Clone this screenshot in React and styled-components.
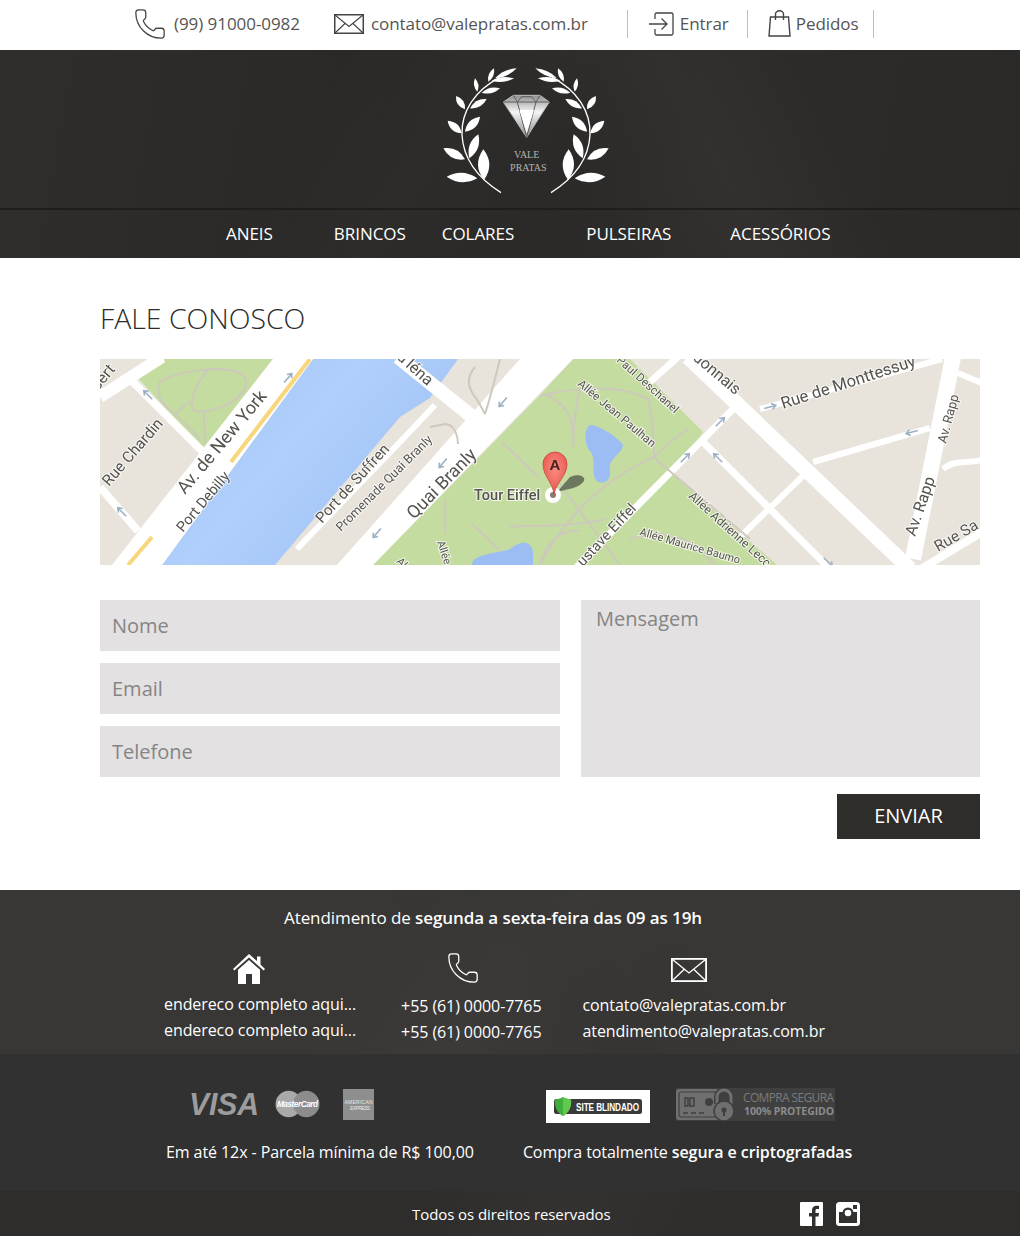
import React from 'react';
import styled, { createGlobalStyle } from 'styled-components';
import { Phone } from 'lucide-react';

const GlobalStyle = createGlobalStyle`
  html, body {
    margin: 0;
    padding: 0;
    background: #fff;
  }
  body {
    font-family: "Open Sans", "Liberation Sans", sans-serif;
  }
  * {
    box-sizing: border-box;
  }
`;

const Page = styled.div`
  width: 1020px;
  height: 1236px;
  overflow: hidden;
`;

/* top contact bar */
const TopBar = styled.div`
  height: 50px;
  display: flex;
  align-items: center;
  padding: 0 0 3px 136px;
  background: #fff;
  color: #555;
  font-size: 17px;
  letter-spacing: -0.06px;
`;

const TopItem = styled.div`
  display: flex;
  align-items: center;
  gap: ${({ $gap }) => $gap || 8}px;
  margin-left: ${({ $left }) => $left || 0}px;
`;

const TopDivider = styled.span`
  width: 1px;
  height: 28px;
  background: #bdbdbd;
  margin-left: ${({ $left }) => $left}px;
`;

const IconSvg = styled.svg`
  display: block;
  flex-shrink: 0;
`;

/* dark header */
const Header = styled.header`
  height: 208px;
  color: #fff;
  background:
    linear-gradient(118deg, transparent 30%, rgba(255, 255, 255, 0.02) 42%, transparent 55%),
    linear-gradient(62deg, transparent 55%, rgba(255, 255, 255, 0.025) 68%, transparent 80%),
    linear-gradient(100deg, #2f2e2c 0%, #292826 40%, #2d2c2a 70%, #2a2927 100%);
`;

const LogoArea = styled.div`
  height: 160px;
  display: flex;
  justify-content: center;
  padding-left: 30px;
  border-bottom: 2px solid #1f1e1d;
`;

const Nav = styled.nav`
  height: 48px;
  display: flex;
  align-items: center;
  padding: 0 0 2px 226px;
  font-size: 17px;
  letter-spacing: -0.05px;
`;

const NavLink = styled.a`
  color: #fff;
  margin-left: ${({ $left }) => $left || 0}px;
`;

/* page content */
const Main = styled.main`
  height: 632px;
  padding: 40px 40px 0 100px;
  background: #fff;
`;

const Title = styled.h1`
  margin: 0 0 20px;
  height: 41px;
  font-size: 28.4px;
  line-height: 41px;
  font-weight: 300;
  color: #2d2c2a;
`;

const MapBox = styled.div`
  width: 880px;
  height: 206px;
  overflow: hidden;
  svg {
    display: block;
    filter: blur(0.35px);
  }
`;

const MapLabel = styled.text`
  font-family: Roboto, "Liberation Sans", sans-serif;
  font-size: ${({ $size }) => $size}px;
  font-weight: ${({ $bold }) => ($bold ? 500 : 400)};
  fill: #55534e;
  stroke: #fff;
  stroke-opacity: 0.75;
  stroke-width: 2px;
  paint-order: stroke;
`;

const ContactForm = styled.form`
  margin-top: 35px;
  display: grid;
  grid-template-columns: 460px 399px;
  column-gap: 21px;
`;

const FieldColumn = styled.div`
  display: flex;
  flex-direction: column;
  gap: 12px;
`;

const Field = styled.input`
  height: 51px;
  border: none;
  outline: none;
  padding: 0 12px 1px;
  background: #e3e1e2;
  font-family: inherit;
  font-size: 20px;
  &::placeholder {
    color: #858585;
    opacity: 1;
  }
`;

const MessageField = styled.textarea`
  height: 177px;
  border: none;
  outline: none;
  resize: none;
  padding: 4px 15px;
  background: #e3e1e2;
  font-family: inherit;
  font-size: 20px;
  line-height: 30px;
  &::placeholder {
    color: #858585;
    opacity: 1;
  }
`;

const SendRow = styled.div`
  grid-column: 1 / 3;
  display: flex;
  justify-content: flex-end;
  margin-top: 17px;
`;

const SendButton = styled.button`
  width: 143px;
  height: 45px;
  border: none;
  padding: 0 0 2px;
  background: #2e2d29;
  color: #fff;
  font-family: inherit;
  font-size: 20px;
`;

/* footer */
const Footer = styled.footer`
  color: #fff;
  font-size: 16px;
  letter-spacing: -0.08px;
`;

const FooterTop = styled.section`
  height: 164px;
  padding-top: 16px;
  overflow: hidden;
  background:
    linear-gradient(125deg, transparent 35%, rgba(255, 255, 255, 0.015) 50%, transparent 65%),
    linear-gradient(60deg, transparent 40%, rgba(0, 0, 0, 0.04) 55%, transparent 70%),
    #383735;
`;

const Hours = styled.div`
  height: 24px;
  line-height: 24px;
  padding-left: 284px;
  font-size: 17px;
  b {
    font-weight: 600;
  }
`;

const ContactColumns = styled.div`
  display: flex;
  padding: 0 0 0 164px;
  margin-top: 24px;
`;

const ContactColumn = styled.div`
  margin-left: ${({ $left }) => $left || 0}px;
  padding-top: ${({ $top }) => $top || 0}px;
`;

const ContactIcon = styled.div`
  height: 32px;
  margin-top: ${({ $raise }) => $raise || 0}px;
  margin-left: ${({ $indent }) => $indent}px;
  margin-bottom: ${({ $after }) => $after}px;
`;

const ContactLine = styled.div`
  height: 26px;
  line-height: 26px;
  white-space: nowrap;
`;

const FooterMiddle = styled.section`
  height: 137px;
  background: #313131;
  display: flex;
  padding: 32px 0 0 166px;
`;

const PayColumn = styled.div`
  margin-left: ${({ $left }) => $left || 0}px;
`;

const LogoRow = styled.div`
  height: 36px;
  display: flex;
  align-items: center;
  gap: ${({ $gap }) => $gap}px;
  padding-left: ${({ $indent }) => $indent}px;
`;

const PayText = styled.p`
  margin: 18px 0 0;
  height: 24px;
  line-height: 24px;
  white-space: nowrap;
  b {
    font-weight: 600;
  }
`;

const FooterBottom = styled.section`
  height: 45px;
  display: flex;
  align-items: center;
  padding: 0 0 0 412px;
  font-size: 15px;
  background:
    linear-gradient(115deg, transparent 40%, rgba(255, 255, 255, 0.025) 55%, transparent 70%),
    #2f2d2b;
`;

const Social = styled.div`
  display: flex;
  gap: 13px;
  margin-left: 189px;
`;

const WhiteBadge = styled.div`
  width: 104px;
  height: 33px;
  background: #fff;
  display: flex;
  align-items: center;
  justify-content: center;
  margin-top: 5px;
`;

const AmexMark = styled.div`
  margin-left: 7px;
`;

const PhoneIcon = styled(Phone)`
  display: block;
  flex-shrink: 0;
  margin-left: ${({ $left }) => $left || 0}px;
`;

/* icons */
const MailIcon = ({ color = '#444', width = 30, height = 20 }) => (
  <IconSvg width={width} height={height} viewBox="0 0 30 20" fill="none" stroke={color}>
    <rect x="0.75" y="0.75" width="28.5" height="18.5" strokeWidth="1.5" />
    <path d="M1 1l14 11.5L29 1M1 19l10.5-10M29 19L18.5 9" strokeWidth="1.1" />
  </IconSvg>
);

const EnterIcon = () => (
  <IconSvg width="25" height="24" viewBox="0 0 25 24" fill="none" stroke="#444" strokeWidth="1.3">
    <path d="M6 7V2.500a1.500 1.500 0 0 1 1.500-1.500h15A1.500 1.500 0 0 1 24 2.500v19a1.500 1.500 0 0 1-1.500 1.500h-15A1.500 1.500 0 0 1 6 21.500V17" />
    <path d="M0 12h18M12.500 6.500L18 12l-5.500 5.500" />
  </IconSvg>
);

const BagIcon = () => (
  <IconSvg width="23" height="27" viewBox="0 0 23 27" fill="none" stroke="#444" strokeWidth="1.4">
    <path d="M2.500 7h18L22 26H1z" />
    <path d="M7.500 10V4a4 3.300 0 0 1 8 0v6" />
  </IconSvg>
);

const HouseIcon = () => (
  <IconSvg width="32" height="30" viewBox="0 0 32 30" fill="#fff">
    <path d="M16 0l8 7V2.500h3.500v8L32 15l-1.300 1.500L16 3.500 1.300 16.500 0 15z" />
    <path d="M16 6l11 9.800V30h-8v-10h-6v10H5V15.800z" />
  </IconSvg>
);

const FacebookIcon = () => (
  <IconSvg width="23" height="24" viewBox="0 0 23 24">
    <rect width="23" height="24" rx="1" fill="#fff" />
    <path d="M15.500 24v-9.500h3l.5-3.500h-3.500V8.800c0-1.100.4-1.700 1.800-1.700H19V4c-.5-.1-1.400-.2-2.500-.2-2.700 0-4.500 1.600-4.500 4.500V11H9v3.500h3V24z" fill="#33312f" />
  </IconSvg>
);

const InstagramIcon = () => (
  <IconSvg width="24" height="24" viewBox="0 0 24 24">
    <rect width="24" height="24" rx="3.500" fill="#fff" />
    <rect x="3" y="10" width="18" height="11" fill="#33312f" />
    <path d="M3 10h4a6 6 0 0 0 10 0h4V4.500H3z" fill="#fff" />
    <circle cx="12" cy="11" r="5.500" fill="#33312f" />
    <circle cx="12" cy="11" r="3.300" fill="#fff" />
    <rect x="17" y="3" width="4" height="4" fill="#33312f" />
  </IconSvg>
);

/* logo wreath, coordinates are in a 630x480 box */
const leafPath = ([x1, y1, x2, y2, w]) => {
  const dx = x2 - x1;
  const dy = y2 - y1;
  const len = Math.hypot(dx, dy);
  const nx = (-dy / len) * w;
  const ny = (dx / len) * w;
  const mx = x1 + dx * 0.5;
  const my = y1 + dy * 0.5;
  return `M${x1} ${y1}Q${mx + nx} ${my + ny} ${x2} ${y2}Q${mx - nx} ${my - ny} ${x1} ${y1}Z`;
};

const leaves = [
  [172, 385, 80, 380, 28],
  [192, 390, 190, 298, 34],
  [135, 328, 70, 295, 26],
  [148, 325, 175, 253, 26],
  [125, 250, 83, 212, 22],
  [135, 245, 180, 200, 24],
  [135, 178, 108, 138, 19],
  [150, 175, 200, 147, 19],
  [172, 125, 165, 85, 13],
  [185, 128, 240, 115, 16],
  [205, 95, 222, 55, 14],
  [215, 92, 282, 85, 14],
  [225, 85, 290, 55, 14],
];

const WreathSide = () => (
  <g fill="#fff">
    <path d="M243 428C175 385 130 330 126 255C123 185 165 120 240 82" fill="none" stroke="#fff" strokeWidth="4" />
    {leaves.map((l) => (
      <path key={l.join('-')} d={leafPath(l)} />
    ))}
  </g>
);

const Logo = () => (
  <IconSvg width="210" height="158" viewBox="0 0 630 474">
    <defs>
      <linearGradient id="gem" x1="0" y1="0" x2="0" y2="1">
        <stop offset="0" stopColor="#8f8f8f" />
        <stop offset="0.4" stopColor="#f5f5f5" />
        <stop offset="1" stopColor="#8a8a8a" />
      </linearGradient>
    </defs>
    <WreathSide />
    <g transform="translate(636 0) scale(-1 1)">
      <WreathSide />
    </g>
    <path d="M250 156L280 136H360L388 156L320 262Z" fill="url(#gem)" stroke="#bcbcbc" strokeWidth="3" />
    <path d="M250 156H388M280 136L292 156L320 262L348 156L360 136M292 156L305 140H335L348 156" fill="none" stroke="#5d5d5d" strokeWidth="3" />
    <path d="M298 180H342L320 250Z" fill="#fff" />
    <text x="320" y="323" textAnchor="middle" fontFamily="Liberation Serif, serif" fontSize="30" fill="#b4b4b4">VALE</text>
    <text x="325" y="364" textAnchor="middle" fontFamily="Liberation Serif, serif" fontSize="30" fill="#b4b4b4">PRATAS</text>
  </IconSvg>
);

/* map data */
const roads = [
  ['M0 38L62 -2', 12],
  ['M30 20L105 95', 8],
  ['M0 128L38 172', 8],
  ['M298 -2L385 68', 14],
  ['M197 190L300 83L335 46', 6],
  ['M550 23L578 -2', 7],
  ['M637 46L540 144L475 210', 7],
  ['M588 -2L810 210', 15],
  ['M603 83L730 210', 7],
  ['M830 69L713 103', 6],
  ['M707 113L640 178', 6],
  ['M660 50L842 0', 6],
  ['M853 -2L813 200', 16],
  ['M821 210L882 173', 8],
  ['M843 110C855 100 868 105 882 101', 6],
  ['M858 14L882 24', 6],
];

const parkPaths = [
  'M440 37C475 28 520 25 548 40C555 70 552 85 555 97C520 115 480 135 440 205',
  'M480 28C475 50 473 70 473 88',
  'M445 35C465 45 475 55 473 88',
  'M555 97L569 84L588 70',
  'M553 98L650 180',
  'M456 120L520 206',
  'M410 168C425 165 465 170 505 160',
  'M440 206C445 185 460 170 480 172',
  'M530 180C560 170 590 175 615 206',
  'M372 165L415 206',
  'M345 140L345 175M402 83L440 120',
  'M60 22C55 50 65 40 100 80M60 22C90 8 140 5 146 20C148 40 115 55 95 52C85 45 100 20 110 8M75 55L90 42M103 52C105 65 105 75 105 85',
  'M375 8C365 20 368 30 378 42L385 55M400 0C395 20 390 40 385 55M330 68L345 65C355 65 358 78 358 85',
];

const labels = [
  { text: 'sert', x: -2, y: 32, angle: -50, size: 16 },
  { text: 'Rue Chardin', x: 9, y: 128, angle: -49, size: 15.5 },
  { text: 'Av. de New York', x: 85, y: 136, angle: -50, size: 18 },
  { text: 'Port Debilly', x: 83, y: 174, angle: -50, size: 14.500 },
  { text: 'Port de Suffren', x: 222, y: 165, angle: -47.500, size: 15 },
  { text: 'Promenade Quai Branly', x: 241, y: 173, angle: -45, size: 12.500 },
  { text: 'Quai Branly', x: 314, y: 161, angle: -45.500, size: 18 },
  { text: "d'Iéna", x: 296, y: -1, angle: 42, size: 16 },
  { text: 'Allée', x: 337, y: 183, angle: 72, size: 11 },
  { text: 'Al', x: 296, y: 203, angle: 45, size: 11 },
  { text: 'Tour Eiffel', x: 374, y: 141, angle: 0, size: 14.500, bold: true },
  { text: 'Allée Jean Paulhan', x: 477, y: 26, angle: 40, size: 11.500 },
  { text: 'Paul Deschanel', x: 516, y: 2, angle: 42, size: 11.500 },
  { text: 'donnais', x: 592, y: 0, angle: 40, size: 16 },
  { text: 'Rue de Monttessuy', x: 683, y: 50, angle: -18, size: 16.500 },
  { text: 'Av. Rapp', x: 846, y: 85, angle: -75, size: 13 },
  { text: 'Av. Rapp', x: 815, y: 178, angle: -71, size: 16 },
  { text: 'Rue Sa', x: 838, y: 193, angle: -30, size: 15.500 },
  { text: 'ustave Eiffel', x: 483, y: 208, angle: -47, size: 14.500 },
  { text: 'Allée Maurice Baumo', x: 539, y: 176, angle: 16, size: 11 },
  { text: 'Allée Adrienne Lecc', x: 588, y: 138, angle: 42, size: 12 },
];

const arrows = [
  [188, 19, -50], [48, 36, 225], [22, 153, 225], [403, 43, 130], [343, 104, 130], [277, 174, 130],
  [670, 48, -15], [620, 63, -45], [585, 99, -45], [618, 99, 225], [812, 73, 165], [728, 203, 45],
];

const MapDrawing = () => (
  <svg width="880" height="206" viewBox="0 0 880 206">
    <defs>
      <linearGradient id="river" x1="0" y1="0" x2="1" y2="0.6">
        <stop offset="0" stopColor="#9fc1f4" />
        <stop offset="0.5" stopColor="#b0cffb" />
        <stop offset="1" stopColor="#9fc1f4" />
      </linearGradient>
      <radialGradient id="pinHead" cx="0.5" cy="0.4" r="0.6">
        <stop offset="0" stopColor="#f98d83" />
        <stop offset="1" stopColor="#e8564b" />
      </radialGradient>
    </defs>
    <rect width="880" height="206" fill="#e8e4dc" />
    <path d="M38 19L65 0H173L103 90Z" fill="#c4dc9f" />
    <path d="M440 36L473 0H530L603 73L573 116L677 206H273Z" fill="#c4dc9f" />
    <path d="M213 0H358L330 39L300 58L175 206H62Z" fill="url(#river)" />
    <path d="M173 0H213L62 206H12Z" fill="#fff" />
    <path d="M420 0H473L273 206H237Z" fill="#fff" />
    <path d="M210 0L131 103M52 178L28 206" stroke="#f8d67c" strokeWidth="4" fill="none" />
    {roads.map(([d, w]) => (
      <path key={d} d={d} stroke="#fff" strokeWidth={w} fill="none" />
    ))}
    {parkPaths.map((d) => (
      <path key={d} d={d} stroke="#cdc9bc" strokeWidth="2" fill="none" />
    ))}
    <path d="M490 66C500 66 520 80 523 86C522 95 508 100 510 110C512 125 500 125 497 122C490 115 497 100 490 92C484 85 484 70 490 66Z" fill="#9bbdf3" />
    <path d="M372 206C372 195 395 195 410 190C425 178 433 185 433 195L433 206Z" fill="#9bbdf3" />
    {arrows.map(([x, y, a]) => (
      <path key={`${x}-${y}`} d="M-6 0H5M2 -3L6 0L2 3" transform={`translate(${x} ${y}) rotate(${a})`} stroke="#9db0c4" strokeWidth="1.600" fill="none" />
    ))}
    {labels.map((l) => (
      <MapLabel key={l.text + l.x} $size={l.size} $bold={l.bold} transform={`translate(${l.x} ${l.y}) rotate(${l.angle})`}>
        {l.text}
      </MapLabel>
    ))}
    <path d="M457 133L470 118C478 114 486 117 484 122C478 130 466 130 457 133Z" fill="#5d6651" opacity="0.85" />
    <circle cx="453" cy="136" r="8" fill="#fff" />
    <circle cx="453" cy="136" r="3" fill="#8a7a70" />
    <path d="M454 135C452 122 443 117 443 105A12 12 0 0 1 467 105C467 117 457 122 454 135Z" fill="url(#pinHead)" stroke="#c8453c" strokeWidth="0.800" />
    <text x="455" y="111" textAnchor="middle" fontFamily="Liberation Sans, sans-serif" fontSize="15" fontWeight="700" fill="#4a2320">A</text>
  </svg>
);

/* payment and trust logos */
const CardLogos = () => (
  <>
    <IconSvg width="70" height="30" viewBox="0 0 70 30">
      <text x="0" y="26" fontFamily="Liberation Sans, sans-serif" fontSize="32" fontWeight="700" fontStyle="italic" fill="#9c9c9c" textLength="70" lengthAdjust="spacingAndGlyphs">VISA</text>
    </IconSvg>
    <IconSvg width="45" height="28" viewBox="0 0 46 28">
      <circle cx="14" cy="14" r="13.500" fill="#a9a9a9" />
      <circle cx="32" cy="14" r="13.500" fill="#8c8c8c" />
      <text x="23" y="17" textAnchor="middle" fontFamily="Liberation Sans, sans-serif" fontSize="8.500" fontWeight="700" fontStyle="italic" fill="#fff" textLength="42">MasterCard</text>
    </IconSvg>
    <AmexMark>
      <IconSvg width="31" height="31" viewBox="0 0 31 31">
        <rect width="31" height="31" fill="#8e8e8e" />
        <text x="15.500" y="15" textAnchor="middle" fontFamily="Liberation Sans, sans-serif" fontSize="5" fill="#e8e8e8" textLength="28">AMERICAN</text>
        <text x="17" y="21" textAnchor="middle" fontFamily="Liberation Sans, sans-serif" fontSize="5" fill="#e8e8e8" textLength="20">EXPRESS</text>
      </IconSvg>
    </AmexMark>
  </>
);

const SiteBlindado = () => (
  <IconSvg width="88" height="19" viewBox="0 0 88 19">
    <rect x="0" y="2" width="88" height="15" rx="2.500" fill="#3a3a3a" />
    <path d="M9 0C12 2 15 2 17 2.500C18 9 15 16 9 19C3 16 0 9 1 2.500C3 2 6 2 9 0Z" fill="#3fae3a" />
    <path d="M9 0C12 2 15 2 17 2.500C18 9 15 16 9 19Z" fill="#63c94e" />
    <text x="22" y="13.500" fontFamily="Liberation Sans, sans-serif" fontSize="10.500" fontWeight="700" fill="#fff" textLength="63" lengthAdjust="spacingAndGlyphs">SITE BLINDADO</text>
  </IconSvg>
);

const CompraSegura = () => (
  <IconSvg width="159" height="33" viewBox="0 0 159 33">
    <rect width="159" height="33" fill="#3f3f3f" />
    <rect y="1" width="44" height="31" rx="3" fill="#6f6f6f" />
    <rect x="3" y="4" width="38" height="25" rx="2" fill="none" stroke="#3f3f3f" strokeWidth="1.200" />
    <path d="M9 10h3v8H9zM14 10h4v8h-4zM7 25h5M15 25h5M23 25h5" stroke="#3f3f3f" strokeWidth="1.500" fill="none" />
    <circle cx="33" cy="14" r="4" fill="#3f3f3f" />
    <path d="M41 16v-7a7 7 0 0 1 14 0v7" stroke="#3f3f3f" strokeWidth="6" fill="none" />
    <path d="M41 16v-7a7 7 0 0 1 14 0v7" stroke="#6f6f6f" strokeWidth="3" fill="none" />
    <circle cx="48" cy="23" r="10" fill="#6f6f6f" stroke="#3f3f3f" strokeWidth="1.500" />
    <circle cx="48" cy="22" r="2.500" fill="#3f3f3f" />
    <rect x="47" y="22" width="2" height="6" fill="#3f3f3f" />
    <text x="67" y="14" fontFamily="Open Sans, sans-serif" fontSize="12" fill="#7b7b7b" textLength="91">COMPRA SEGURA</text>
    <text x="68" y="27" fontFamily="Open Sans, sans-serif" fontSize="10.500" fontWeight="700" fill="#8b8b8b" textLength="90">100% PROTEGIDO</text>
  </IconSvg>
);

export default function App() {
  return (
    <Page>
      <GlobalStyle />
      <TopBar>
        <TopItem $gap={7}>
          <PhoneIcon $left={-3} size={34} strokeWidth={0.9} color="#444" />
          (99) 91000-0982
        </TopItem>
        <TopItem $left={34} $gap={7}>
          <MailIcon />
          contato@valepratas.com.br
        </TopItem>
        <TopDivider $left={39} />
        <TopItem $left={21} $gap={6}>
          <EnterIcon />
          Entrar
        </TopItem>
        <TopDivider $left={18} />
        <TopItem $left={20} $gap={5}>
          <BagIcon />
          Pedidos
        </TopItem>
        <TopDivider $left={14} />
      </TopBar>

      <Header>
        <LogoArea>
          <Logo />
        </LogoArea>
        <Nav>
          <NavLink>ANEIS</NavLink>
          <NavLink $left={61}>BRINCOS</NavLink>
          <NavLink $left={36}>COLARES</NavLink>
          <NavLink $left={72}>PULSEIRAS</NavLink>
          <NavLink $left={59}>ACESSÓRIOS</NavLink>
        </Nav>
      </Header>

      <Main>
        <Title>FALE CONOSCO</Title>
        <MapBox>
          <MapDrawing />
        </MapBox>
        <ContactForm>
          <FieldColumn>
            <Field placeholder="Nome" />
            <Field placeholder="Email" />
            <Field placeholder="Telefone" />
          </FieldColumn>
          <MessageField placeholder="Mensagem" />
          <SendRow>
            <SendButton type="button">ENVIAR</SendButton>
          </SendRow>
        </ContactForm>
      </Main>

      <Footer>
        <FooterTop>
          <Hours>
            Atendimento de <b>segunda a sexta-feira das 09 as 19h</b>
          </Hours>
          <ContactColumns>
            <ContactColumn>
              <ContactIcon $indent={69} $after={5}>
                <HouseIcon />
              </ContactIcon>
              <ContactLine>endereco completo aqui...</ContactLine>
              <ContactLine>endereco completo aqui...</ContactLine>
            </ContactColumn>
            <ContactColumn $left={45}>
              <ContactIcon $indent={45} $raise={-3} $after={10}>
                <PhoneIcon size={34} strokeWidth={0.9} color="#fff" />
              </ContactIcon>
              <ContactLine>+55 (61) 0000-7765</ContactLine>
              <ContactLine>+55 (61) 0000-7765</ContactLine>
            </ContactColumn>
            <ContactColumn $left={41} $top={4}>
              <ContactIcon $indent={89} $after={2}>
                <MailIcon color="#fff" width={36} height={24} />
              </ContactIcon>
              <ContactLine>contato@valepratas.com.br</ContactLine>
              <ContactLine>atendimento@valepratas.com.br</ContactLine>
            </ContactColumn>
          </ContactColumns>
        </FooterTop>

        <FooterMiddle>
          <PayColumn>
            <LogoRow $gap={16} $indent={23}>
              <CardLogos />
            </LogoRow>
            <PayText>Em até 12x - Parcela mínima de R$ 100,00</PayText>
          </PayColumn>
          <PayColumn $left={49}>
            <LogoRow $gap={26} $indent={23}>
              <WhiteBadge>
                <SiteBlindado />
              </WhiteBadge>
              <CompraSegura />
            </LogoRow>
            <PayText>
              Compra totalmente <b>segura e criptografadas</b>
            </PayText>
          </PayColumn>
        </FooterMiddle>

        <FooterBottom>
          Todos os direitos reservados
          <Social>
            <FacebookIcon />
            <InstagramIcon />
          </Social>
        </FooterBottom>
      </Footer>
    </Page>
  );
}
